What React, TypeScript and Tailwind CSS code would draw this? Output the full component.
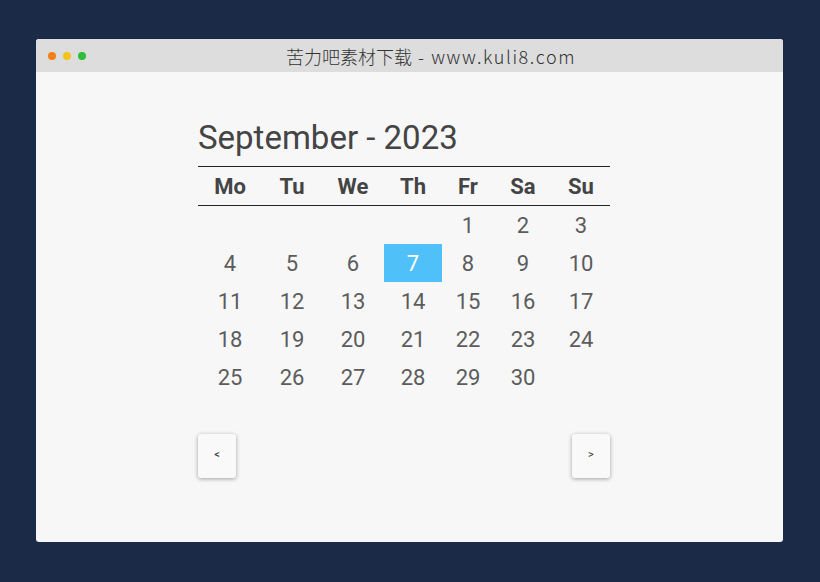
import React from "react";

const weeks: (number | null)[][] = [
  [null, null, null, null, 1, 2, 3],
  [4, 5, 6, 7, 8, 9, 10],
  [11, 12, 13, 14, 15, 16, 17],
  [18, 19, 20, 21, 22, 23, 24],
  [25, 26, 27, 28, 29, 30, null],
];
const days = ["Mo", "Tu", "We", "Th", "Fr", "Sa", "Su"];
const widths = ["w-[64px]", "w-[60px]", "w-[62px]", "w-[58px]", "w-[52px]", "w-[58px]", "w-[58px]"];

export default function App() {
  return (
    <div className="w-[820px] h-[582px] bg-[#1b2a47] pt-[39px] pl-[36px]" style={{ fontFamily: "Roboto, 'Liberation Sans', sans-serif" }}>
      <div className="w-[747px] h-[503px] bg-[#f7f7f8] rounded-[3px] overflow-hidden flex flex-col">
        <div className="h-[33px] bg-[#dddddd] flex items-center pl-[12px] shrink-0">
          <div className="flex gap-[7px]">
            <span className="w-[8px] h-[8px] rounded-full bg-[#f57f17]" />
            <span className="w-[8px] h-[8px] rounded-full bg-[#f2c318]" />
            <span className="w-[8px] h-[8px] rounded-full bg-[#2bbf3a]" />
          </div>
          <div className="ml-[200px] text-[18px] leading-[24px] font-light text-[#333] flex items-center" style={{ fontFamily: "'Noto Sans CJK SC', 'DejaVu Sans', sans-serif" }}>
            <span>苦力吧素材下载</span>
            <span className="ml-[6px] tracking-[1.6px]">- www.kuli8.com</span>
          </div>
        </div>
        <div className="pl-[162px] pt-[46px]">
          <div className="text-[33px] leading-[40px] text-[#444] h-[48px]">September - 2023</div>
          <table className="border-collapse">
            <thead>
              <tr className="border-t border-b border-[#222] h-[39px]">
                {days.map((d, i) => (
                  <th key={d} className={`${widths[i]} p-0 text-[22px] font-bold text-[#444] text-center`}>{d}</th>
                ))}
              </tr>
            </thead>
            <tbody>
              {weeks.map((w, ri) => (
                <tr key={ri} className="h-[38px]">
                  {w.map((d, ci) => (
                    <td
                      key={ci}
                      className={`p-0 pt-[1px] text-center text-[22px] ${d === 7 ? "bg-[#4fc0f8] text-white" : "text-[#5c5c5c]"}`}
                    >
                      {d ?? ""}
                    </td>
                  ))}
                </tr>
              ))}
            </tbody>
          </table>
          <div className="w-[412px] flex justify-between mt-[38px]">
            <button className="w-[38px] h-[44px] bg-[#f9f9f9] rounded-[3px] shadow-[0_1px_4px_rgba(0,0,0,0.35)] text-[11px] text-[#333]">&lt;</button>
            <button className="w-[38px] h-[44px] bg-[#f9f9f9] rounded-[3px] shadow-[0_1px_4px_rgba(0,0,0,0.35)] text-[11px] text-[#333]">&gt;</button>
          </div>
        </div>
      </div>
    </div>
  );
}
